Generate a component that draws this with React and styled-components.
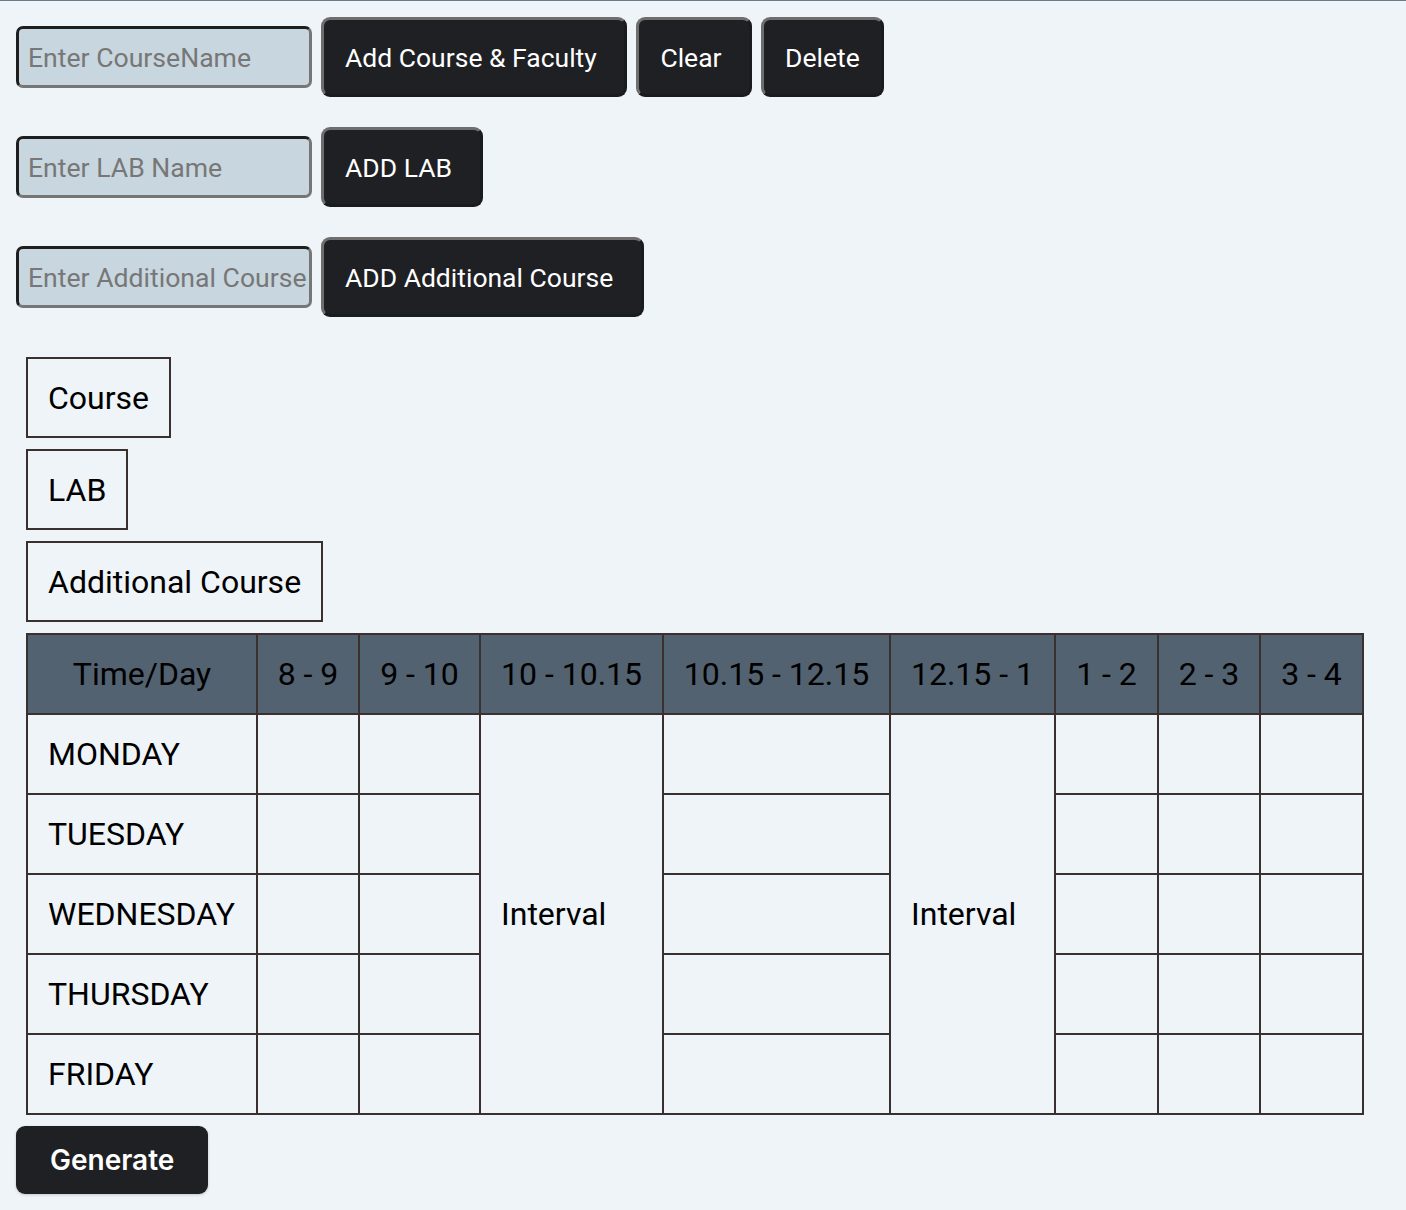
import React from 'react';
import styled, { createGlobalStyle } from 'styled-components';

const GlobalStyle = createGlobalStyle`
  body {
    margin: 0;
    background: #eff4f8;
    border-top: 1px solid #6b7b87;
    font-family: Roboto, 'Liberation Sans', Arial, sans-serif;
  }
`;

const Page = styled.div`
  display: flex;
  flex-direction: column;
  align-items: flex-start;
  padding: 16px 16px 20px 16px;
`;

const Row = styled.div`
  display: flex;
  align-items: center;
  gap: 9px;
  height: 80px;
  margin-bottom: 30px;
`;

const Input = styled.input`
  box-sizing: border-box;
  width: 296px;
  height: 62px;
  padding: 0 0 0 9px;
  background: #c8d6df;
  border: 3px solid;
  border-color: #1e1e1e #767676 #767676 #1e1e1e;
  border-radius: 7px;
  font-family: Roboto, 'Liberation Sans', Arial, sans-serif;
  font-size: 26.6px;
  color: #222;
  outline: none;

  &::placeholder {
    color: #777777;
  }
`;

const Button = styled.button`
  box-sizing: border-box;
  height: 80px;
  padding: 0 21px;
  background: #1f2023;
  color: #ffffff;
  border: 3px solid;
  border-color: #6e6e6e #1a1b1e #1a1b1e #6e6e6e;
  border-radius: 9px;
  font-family: Roboto, 'Liberation Sans', Arial, sans-serif;
  font-size: 26.5px;
  white-space: pre;
  cursor: pointer;
`;

const Lists = styled.div`
  display: flex;
  flex-direction: column;
  align-items: flex-start;
  gap: 11px;
  margin: 10px 0 0 10px;
`;

const TagBox = styled.div`
  box-sizing: border-box;
  height: 81px;
  display: flex;
  align-items: center;
  padding: 0 20px;
  border: 2px solid #3a3030;
  font-size: 32px;
  color: #000;
`;

const Table = styled.table`
  table-layout: fixed;
  border-collapse: collapse;
  width: 1336px;
  font-size: 32px;
  color: #000;
`;

const Th = styled.th`
  height: 78px;
  padding: 0;
  background: #536270;
  border: 2px solid #3a3030;
  font-weight: 400;
  text-align: center;
  white-space: nowrap;
`;

const Td = styled.td`
  height: 78px;
  padding: 0 20px;
  border: 2px solid #3a3030;
  text-align: left;
  vertical-align: middle;
  white-space: nowrap;
`;

const GenerateButton = styled.button`
  margin: 11px 0 0 0;
  height: 68px;
  padding: 0 34px;
  background: #1f2023;
  color: #ffffff;
  border: none;
  border-radius: 9px;
  box-shadow: 0 1px 3px rgba(0, 0, 0, 0.18);
  font-family: Inter, 'Liberation Sans', Arial, sans-serif;
  font-size: 28px;
  font-weight: 600;
  cursor: pointer;
`;

const columns = [
  { label: 'Time/Day', width: 230 },
  { label: '8 - 9', width: 102 },
  { label: '9 - 10', width: 121 },
  { label: '10 - 10.15', width: 183 },
  { label: '10.15 - 12.15', width: 227 },
  { label: '12.15 - 1', width: 165 },
  { label: '1 - 2', width: 103 },
  { label: '2 - 3', width: 102 },
  { label: '3 - 4', width: 103 },
];

const days = ['MONDAY', 'TUESDAY', 'WEDNESDAY', 'THURSDAY', 'FRIDAY'];

function App() {
  return (
    <>
      <GlobalStyle />
      <Page>
        <Row>
          <Input placeholder="Enter CourseName" />
          <Button>{'Add Course & Faculty '}</Button>
          <Button>{'Clear '}</Button>
          <Button>Delete</Button>
        </Row>
        <Row>
          <Input placeholder="Enter LAB Name" />
          <Button>{'ADD LAB '}</Button>
        </Row>
        <Row>
          <Input placeholder="Enter Additional Course" />
          <Button>{'ADD Additional Course '}</Button>
        </Row>

        <Lists>
          <TagBox>Course</TagBox>
          <TagBox>LAB</TagBox>
          <TagBox>Additional Course</TagBox>
          <Table>
            <colgroup>
              {columns.map((c) => (
                <col key={c.label} style={{ width: c.width }} />
              ))}
            </colgroup>
            <thead>
              <tr>
                {columns.map((c) => (
                  <Th key={c.label}>{c.label}</Th>
                ))}
              </tr>
            </thead>
            <tbody>
              {days.map((day, i) => (
                <tr key={day}>
                  <Td>{day}</Td>
                  <Td></Td>
                  <Td></Td>
                  {i === 0 && <Td rowSpan={5}>Interval</Td>}
                  <Td></Td>
                  {i === 0 && <Td rowSpan={5}>Interval</Td>}
                  <Td></Td>
                  <Td></Td>
                  <Td></Td>
                </tr>
              ))}
            </tbody>
          </Table>
        </Lists>
        <GenerateButton>Generate</GenerateButton>
      </Page>
    </>
  );
}

export default App;
